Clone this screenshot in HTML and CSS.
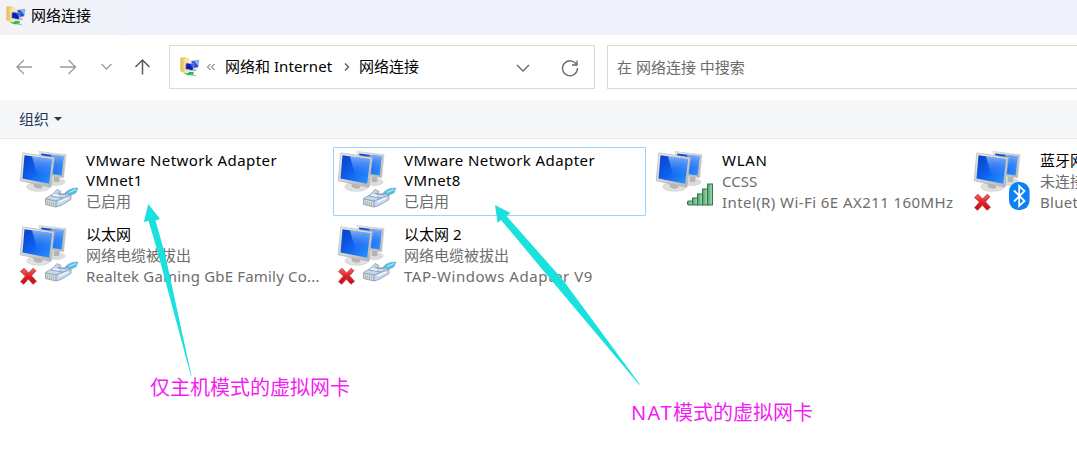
FILE: index.html
```html
<!DOCTYPE html>
<html lang="zh-CN">
<head>
<meta charset="utf-8">
<title>网络连接</title>
<link rel="stylesheet" href="styles.css">
</head>
<body>
<svg class="defs" width="0" height="0">
  <defs>
    <linearGradient id="screen" x1="0" y1="0" x2="1" y2="1"><stop offset="0" stop-color="#0a3fc6"/><stop offset=".5" stop-color="#0d61f0"/><stop offset="1" stop-color="#2e97ff"/></linearGradient>
    <linearGradient id="shine" x1="0" y1="0" x2="0" y2="1"><stop offset="0" stop-color="#b4d6ff" stop-opacity=".7"/><stop offset="1" stop-color="#1f78fa" stop-opacity="0"/></linearGradient>
    <linearGradient id="metal" x1="0" y1="0" x2="1" y2="1"><stop offset="0" stop-color="#eeeeee"/><stop offset="1" stop-color="#b4b4b4"/></linearGradient>
    <linearGradient id="bar" x1="0" y1="0" x2="1" y2="0"><stop offset="0" stop-color="#4fa06c"/><stop offset="1" stop-color="#a3dfb0"/></linearGradient>
    <linearGradient id="red" x1="0" y1="0" x2="0" y2="1"><stop offset="0" stop-color="#f4676a"/><stop offset=".5" stop-color="#dc2026"/><stop offset="1" stop-color="#c40a10"/></linearGradient>
    <linearGradient id="folder" x1="0" y1="0" x2="1" y2="0"><stop offset="0" stop-color="#e5bd58"/><stop offset="1" stop-color="#fbeeb0"/></linearGradient>
    <g id="monitors">
      <ellipse cx="41" cy="35" rx="9.5" ry="4" fill="#dcdcdc"/>
      <path d="M38 26l7 2-1 7h-5z" fill="#b4b4b4"/>
      <path d="M24 4.500L51 7.800 48.600 30.800 30 28z" fill="url(#metal)" stroke="#c2c2c2" stroke-width=".6"/>
      <path d="M26 6.400L48.700 9.200 46.600 28.400 30 26z" fill="url(#screen)"/>
      <path d="M36 7.700L48.700 9.200 46.600 28.400 41 27.500z" fill="url(#shine)"/>
      <ellipse cx="23.500" cy="39.700" rx="11.700" ry="4.600" fill="#e0e0e0" stroke="#cacaca" stroke-width=".6"/>
      <path d="M18 34l10 2-1 5q-4 2-8-1z" fill="#b5b5b5"/>
      <path d="M7.800 5.900L39.300 10.500 36 40.300 5.200 33.800z" fill="url(#metal)" stroke="#b4b4b4" stroke-width=".7"/>
      <path d="M9.500 8.200L37 12.200 34.200 36.700 7.500 31.400z" fill="url(#screen)"/>
      <path d="M17 9.300L37 12.200 35.500 26 23 32z" fill="url(#shine)"/>
    </g>
    <g id="plug">
      <path d="M50 46q5-5.500 13-5l-2 5-7 3z" fill="#55bce2" stroke="#62b4d4" stroke-width=".5"/>
      <path d="M54 45.500l7-3" stroke="#b9effc" stroke-width="1.300"/>
      <path d="M30.500 51.500L38 47l4-4.500 4 2-2 3 8-1 4 2v4L46 58.500l-5 1.500-10.500-2.500z" fill="#c7d8ea" stroke="#8498b4" stroke-width=".8"/>
      <path d="M31 52l10 2 15-6M41 54v6M36 49l12 2M42 46l10 2" fill="none" stroke="#7b92b0" stroke-width=".8"/>
      <path d="M44 55l9-4M38 48l6 1" stroke="#edf7ff" stroke-width="1.400"/>
      <path d="M32.500 54v3M34.500 54.500v3M36.500 55v3M38.500 55.500v3" stroke="#c5ba6a" stroke-width="1"/>
    </g>
    <g id="cross">
      <path d="M5.500 50.500l3.500-3.300 4.600 4.800 4.600-4.800 2.800 2.500-4.500 5.100 5 5.500-3.500 3-4.600-5.200-4.800 5.200-3-2.600 4.800-5.700z" fill="url(#red)" stroke="#c2383c" stroke-width=".8" stroke-linejoin="round"/>
    </g>
    <g id="netfolder">
      <path d="M.5 1l4-.7L9 2v12l-4 2-4.500-2z" fill="url(#folder)" stroke="#dcbf72" stroke-width=".4"/>
      <path d="M4.500 2L9 1v13l-4.500 2z" fill="#f8e6a0"/>
      <path d="M11 4l8-1-.8 7.500-6 1z" fill="#2350cb" stroke="#c9cdd7" stroke-width=".8"/>
      <path d="M14 4l4.500-.5-.6 5z" fill="#7eb5ff"/>
      <path d="M6 6l8 .8-1 7L5.500 12z" fill="#0b1fb4" stroke="#b8bfce" stroke-width=".7"/>
      <path d="M10 7l3.500.3-.6 4z" fill="#4269e4"/>
      <path d="M14 12l3 .5-1 1.500-3 .5z" fill="#b8b8bb"/>
      <path d="M3.500 16.200h4l2-1.400 4.500.5-1 3H8z" fill="#25bb55"/>
      <path d="M11 17.800l5 1" stroke="#aab8ac"/>
    </g>
  </defs>
</svg>

<div class="window">
  <header class="titlebar">
    <svg class="small-icon" viewBox="0 0 20 20"><use href="#netfolder"/></svg>
    <span>网络连接</span>
  </header>
  <nav class="navbar">
    <svg class="nav-icons" viewBox="0 0 169 65" fill="none" stroke="#9a9a9a" stroke-width="1.300">
      <path d="M32 32H17M24 25l-7 7 7 7M60 32h15M68.500 25l7 7-7 7"/>
      <path d="M101.500 29l5 5 5-5"/>
      <path d="M142.500 39.500V25M135.500 32l7-7 7 7" stroke="#5c5c5c" stroke-width="1.500"/>
    </svg>
    <div class="address">
      <svg class="small-icon" viewBox="0 0 20 20"><use href="#netfolder"/></svg>
      <svg class="laquo" viewBox="0 0 10 8"><path d="M4.500 1L1.500 4l3 3M8.500 1l-3 3 3 3"/></svg>
      <span class="crumb">网络和 <span class="internet">Internet</span></span>
      <svg class="sep" viewBox="0 0 6 10"><path d="M1 1.500L4.500 5 1 8.500"/></svg>
      <span>网络连接</span>
      <svg class="address-actions" viewBox="0 0 72 42" fill="none" stroke="#666" stroke-width="1.300">
        <path d="M1 19l6 6 6-6"/>
        <path d="M60.500 18.500A7.500 7.500 0 1 0 61.500 22M61 14.500v4.500h-5"/>
      </svg>
    </div>
    <div class="search">在 网络连接 中搜索</div>
  </nav>
  <div class="toolbar"><span>组织</span><i class="caret"></i></div>

  <main class="adapters">
    <section class="adapter">
      <svg class="icon" viewBox="0 0 70 69"><use href="#monitors"/><use href="#plug"/></svg>
      <div class="info"><b class="vm">VMware Network Adapter<br>VMnet1</b><span>已启用</span></div>
    </section>
    <section class="adapter selected">
      <svg class="icon" viewBox="0 0 70 69"><use href="#monitors"/><use href="#plug"/></svg>
      <div class="info"><b class="vm">VMware Network Adapter<br>VMnet8</b><span>已启用</span></div>
    </section>
    <section class="adapter">
      <svg class="icon" viewBox="0 0 70 69"><use href="#monitors"/>
        <g fill="url(#bar)" stroke="#32774b" stroke-width="1"><rect x="36.500" y="54" width="5" height="4" rx="1"/><rect x="41.500" y="51" width="5" height="7"/><rect x="46.500" y="47" width="5" height="11"/><rect x="51.500" y="42" width="5" height="16"/><rect x="56.500" y="37" width="5" height="21"/></g>
      </svg>
      <div class="info"><b class="wlan">WLAN</b><span>CCSS</span><span class="intel">Intel(R) Wi-Fi 6E AX211 160MHz</span></div>
    </section>
    <section class="adapter">
      <svg class="icon" viewBox="0 0 70 69"><use href="#monitors"/><use href="#cross"/>
        <rect x="40" y="35" width="20.600" height="28" rx="9.500" fill="#0a82f5"/>
        <path d="M45 43.500l10.500 10.500-5.300 5V39l5.300 5L45 54.500" fill="none" stroke="#fff" stroke-width="1.800"/>
      </svg>
      <div class="info"><b>蓝牙网络连接</b><span>未连接</span><span class="bt">Bluetooth Device</span></div>
    </section>
    <section class="adapter">
      <svg class="icon" viewBox="0 0 70 69"><use href="#monitors"/><use href="#plug"/><use href="#cross"/></svg>
      <div class="info"><b>以太网</b><span>网络电缆被拔出</span><span class="realtek">Realtek Gaming GbE Family Co...</span></div>
    </section>
    <section class="adapter">
      <svg class="icon" viewBox="0 0 70 69"><use href="#monitors"/><use href="#plug"/><use href="#cross"/></svg>
      <div class="info"><b>以太网 2</b><span>网络电缆被拔出</span><span class="tap">TAP-Windows Adapter V9</span></div>
    </section>
  </main>

  <svg class="arrows" viewBox="0 0 1077 463" fill="#1be1de">
    <path d="M148.300 204L160 219l-4.500 1.500L165 254l26.500 122h-.6L156 246l-7.500-25-4.700 1z"/>
    <path d="M495 205l15.500 8-4 3L563 280l77 104.500h-1L552 281l-51-61-3.300 3z"/>
  </svg>
  <p class="note host">仅主机模式的虚拟网卡</p>
  <p class="note nat"><span class="nat-word">NAT</span>模式的虚拟网卡</p>
</div>
</body>
</html>
```
FILE: styles.css
```css
* { box-sizing: border-box; }
body {
  margin: 0;
  background: #fff;
  color: #000;
  font: 15px/21px "Noto Sans", "Noto Sans CJK SC", sans-serif;
}
.defs { position: absolute; }
.window {
  position: relative;
  width: 1077px;
  height: 463px;
  overflow: hidden;
  white-space: nowrap;
}
.titlebar {
  height: 35px;
  padding: 0 0 4px 6px;
  display: flex;
  align-items: center;
  gap: 5px;
  background: linear-gradient(90deg, #f3f3f6, #eff2fa 130px);
}
.small-icon { width: 20px; height: 20px; flex: none; }
.navbar { height: 65px; display: flex; align-items: flex-start; }
.nav-icons { width: 169px; height: 65px; flex: none; }
.address {
  width: 426px;
  height: 44px;
  margin-top: 10px;
  padding: 0 0 1px 10px;
  border: 1px solid #d9d9d9;
  display: flex;
  align-items: center;
  flex: none;
}
.laquo { width: 10px; height: 8px; margin: 0 9px 0 6px; fill: none; stroke: #555; }
.crumb { width: 107px; }
.internet { letter-spacing: .1px; }
.sep { width: 6px; height: 10px; margin: 0 9px 0 12px; fill: none; stroke: #555; stroke-width: 1.3; }
.address-actions { width: 72px; height: 42px; margin-left: auto; margin-right: 6px; }
.search {
  height: 44px;
  margin: 10px -2px 0 12px;
  padding-left: 9px;
  flex: 1;
  border: 1px solid #d9d9d9;
  color: #6b6b6b;
  line-height: 43px;
}
.toolbar {
  height: 39px;
  padding-left: 19px;
  display: flex;
  align-items: center;
  gap: 5px;
  background: #f5f7f9;
  border-bottom: 1px solid #e7e9eb;
  color: #1e395b;
}
.caret { border: 4px solid transparent; border-top-color: #1e395b; border-bottom: 0; }
.adapters {
  display: grid;
  grid-template-columns: repeat(4, 313px);
  grid-auto-rows: 69px;
  gap: 5px;
  padding: 8px 0 0 15px;
}
.adapter { display: flex; border: 1px solid transparent; }
.selected { border-color: #99d1ff; border-radius: 1px; }
.icon { width: 70px; height: 69px; margin: -1px 0 0 -1px; flex: none; }
.info { display: flex; flex-direction: column; padding: 2px 0 0 1px; color: #6d6d6d; }
.info b { color: #000; font-weight: 400; }
.info .vm { line-height: 20px; padding-bottom: 1px; letter-spacing: .42px; }
.info .wlan { letter-spacing: .7px; }
.intel { letter-spacing: .42px; }
.realtek { letter-spacing: .18px; }
.tap { letter-spacing: .55px; }
.bt { letter-spacing: .3px; }
.arrows { position: absolute; inset: 0; width: 1077px; height: 463px; }
.note {
  position: absolute;
  margin: 0;
  color: #f31cf3;
  font-size: 20px;
  line-height: 28px;
}
.host { left: 150px; top: 374px; }
.nat { left: 631px; top: 399px; }
.nat-word { letter-spacing: 1.4px; }
```
